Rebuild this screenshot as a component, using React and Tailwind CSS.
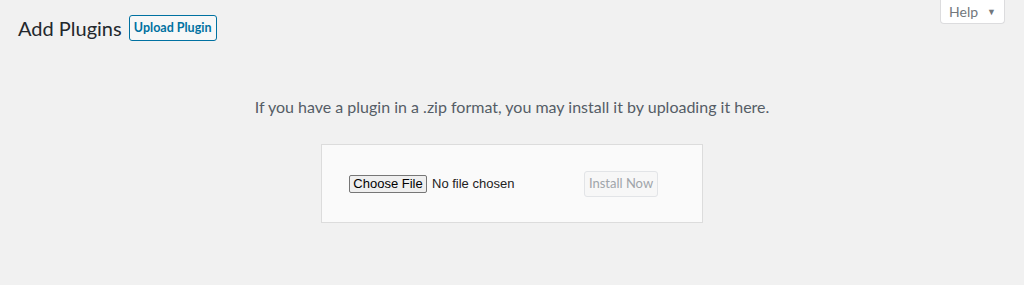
export default function App() {
  return (
    <div className="min-h-[285px] w-full bg-[#f1f1f1] font-['Lato',sans-serif] text-[#23282d]">
      <div className="flex items-start justify-between pl-[18px] pr-[19px]">
        <div className="flex items-center gap-[7px] pt-[15px]">
          <h1 className="text-[20px] leading-[26px] font-normal text-[#23282d]">Add Plugins</h1>
          <button className="h-[26px] w-[88px] rounded-[3px] border border-[#0071a1] bg-[#f7f7f7] text-[12.5px] font-bold text-[#0071a1]">
            Upload Plugin
          </button>
        </div>
        <button className="flex h-[24px] w-[65px] items-center justify-center gap-[9px] rounded-b-[4px] border border-t-0 border-[#dcdcde] bg-white text-[14px] text-[#72777c]">
          <span>Help</span>
          <span className="text-[9px]">▼</span>
        </button>
      </div>

      <p className="mt-[55px] text-center text-[16px] leading-[22px] text-[#555d66]">
        If you have a plugin in a .zip format, you may install it by uploading it here.
      </p>

      <div className="mx-auto mt-[26px] flex h-[79px] w-[382px] items-center justify-between border border-[#dcdcdc] bg-[#fafafa] pl-[27px] pr-[44px]">
        <div className="flex items-center gap-[5px] font-['Liberation_Sans',sans-serif] text-[13px]">
          <span className="flex h-[18px] w-[78px] items-center justify-center rounded-[2px] border border-[#767676] bg-[#efefef] text-[#000]">
            Choose File
          </span>
          <span className="text-[#222]">No file chosen</span>
        </div>
        <button className="h-[26px] w-[74px] rounded-[3px] border border-[#e2e4e7] bg-[#f7f7f7] text-[13px] text-[#a0a5aa]">
          Install Now
        </button>
      </div>
    </div>
  );
}
